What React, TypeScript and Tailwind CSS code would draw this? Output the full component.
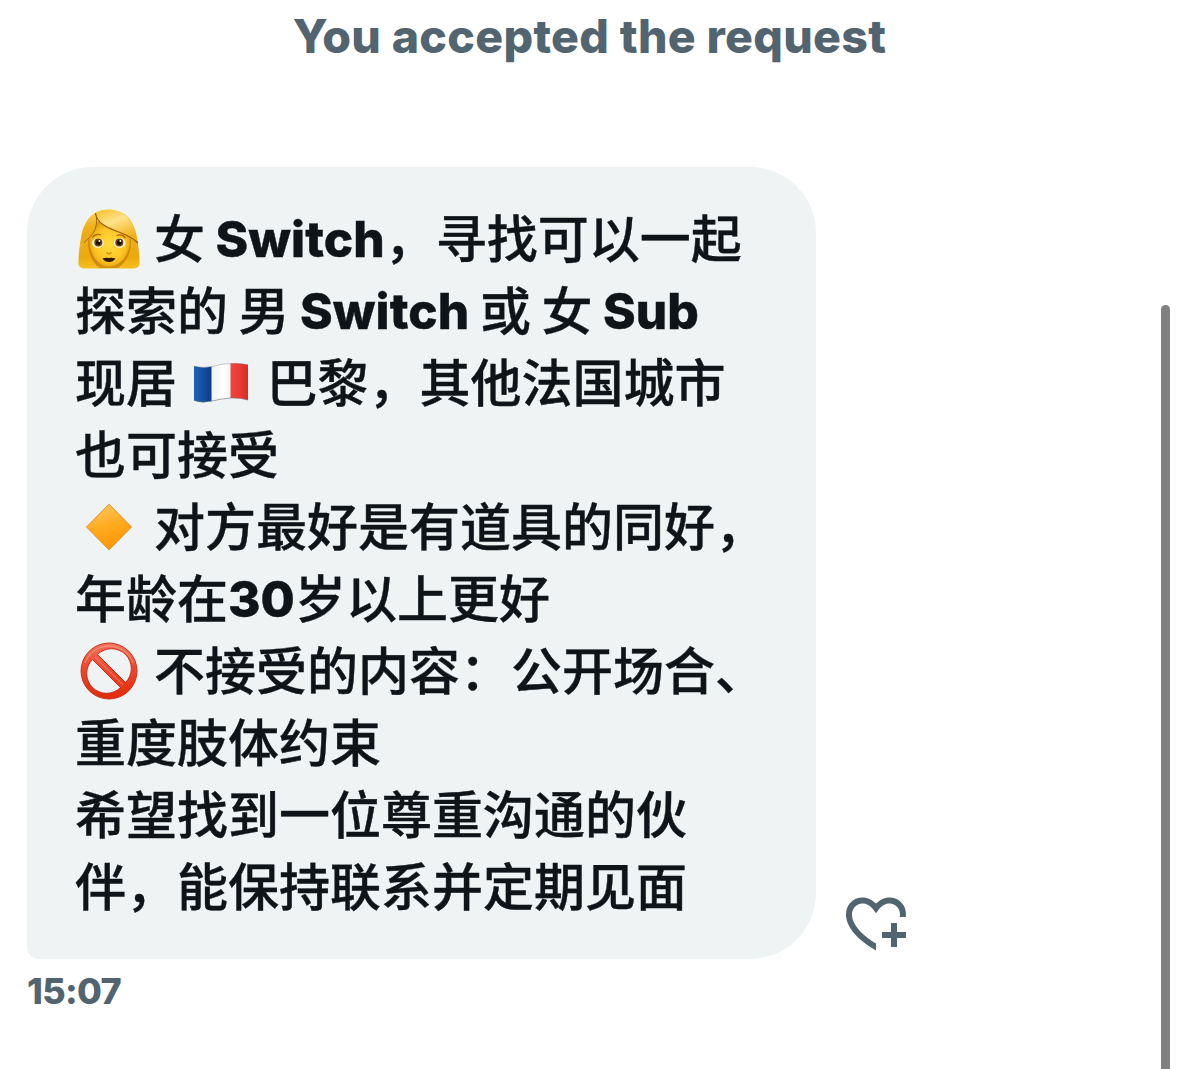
import type { ReactNode } from "react";

function WomanEmoji() {
  return (
    <svg viewBox="0 0 62 60" className="h-[60px] w-[62px]" role="img" aria-label="woman">
      <defs>
        <linearGradient id="hair" x1="0" y1="0" x2="0" y2="1">
          <stop offset="0" stopColor="#fbd04a" />
          <stop offset="0.4" stopColor="#efb01c" />
          <stop offset="0.8" stopColor="#eba90c" />
          <stop offset="1" stopColor="#f8bf22" />
        </linearGradient>
        <radialGradient id="face" cx="0.5" cy="0.52" r="0.56">
          <stop offset="0" stopColor="#ffdc3c" />
          <stop offset="0.65" stopColor="#fdc524" />
          <stop offset="1" stopColor="#e09a0c" />
        </radialGradient>
        <linearGradient id="fringe" x1="0" y1="0" x2="0.5" y2="1">
          <stop offset="0" stopColor="#f5be28" />
          <stop offset="0.45" stopColor="#ffe38a" />
          <stop offset="1" stopColor="#f1ae10" />
        </linearGradient>
      </defs>
      <path d="M30 0.5C15 1 7 11 4 24C2 34 0.500 43 0.500 54C0.500 58 3 59.500 8 59.500H54C59 59.500 61.500 58 61.500 54C61.500 43 60 34 58 24C54 9 46 0.500 30 0.500Z" fill="url(#hair)" />
      <path d="M10 32C10 18 17 11 31 11C46 11 53 20 53 33C53 44 48 54 40 59H22C14 54 10 44 10 32Z" fill="#b87208" fillOpacity="0.6" />
      <path d="M11.500 31C11.500 18 18 12 31 12C44 12 52 20 52 31C52 46 42 57.500 31 57.500C20 57.500 11.500 46 11.500 31Z" fill="url(#face)" />
      <path d="M17.500 4C10 8 6 16 4 25C3 30 2.500 35 2 39C8 31 15 27 17.500 19C19 14 19 9 17.500 4Z" fill="url(#hair)" />
      <path d="M6 34C10 29 15 27 17.500 19C19 14 19 9 17.500 4" fill="none" stroke="#a96905" strokeWidth="1" />
      <path d="M17.500 4C24 -1 41 -1 49 8C55 15 58 24 60 34C53 27 46 25 38 22C28 18 19 14 17.500 4Z" fill="url(#fringe)" />
      <path d="M17.500 4C19 14 28 18 38 22C46 25 53 27 60 34" fill="none" stroke="#95590a" strokeWidth="1.100" />
      <path d="M14.500 28.500Q17.500 24 23 26M38.500 26.500Q44 24.500 47.500 29" fill="none" stroke="#a86a08" strokeWidth="1.300" />
      <ellipse cx="20" cy="34" rx="5.900" ry="4.900" fill="#fff4cc" />
      <ellipse cx="41.700" cy="34" rx="5.900" ry="4.900" fill="#fff4cc" />
      <circle cx="20.300" cy="33.600" r="4" fill="#6b4114" />
      <circle cx="41.300" cy="33.600" r="4" fill="#6b4114" />
      <circle cx="20.300" cy="33.600" r="2.400" fill="#140c05" />
      <circle cx="41.300" cy="33.600" r="2.400" fill="#140c05" />
      <circle cx="21.300" cy="32" r="0.900" fill="#fff" />
      <circle cx="42.300" cy="32" r="0.900" fill="#fff" />
      <path d="M28.500 43.500Q31 46 33.500 43.500" fill="none" stroke="#d78b08" strokeWidth="1.300" />
      <path d="M24.500 49.500Q27.500 48.200 31 49Q34.500 48.200 37.500 49.500Q35 53 31 53Q27 53 24.500 49.500Z" fill="#34170b" />
    </svg>
  );
}

function FlagEmoji() {
  return (
    <svg viewBox="0 0 54 40" className="h-[40px] w-[54px]" role="img" aria-label="France">
      <defs>
        <linearGradient id="blue" x1="0" y1="0" x2="1" y2="0">
          <stop offset="0" stopColor="#1d63b5" />
          <stop offset="1" stopColor="#0a3c88" />
        </linearGradient>
        <linearGradient id="white" x1="0" y1="0" x2="1" y2="0">
          <stop offset="0" stopColor="#f0f0f1" />
          <stop offset="0.6" stopColor="#ffffff" />
          <stop offset="1" stopColor="#f4f4f5" />
        </linearGradient>
        <linearGradient id="red" x1="0" y1="0" x2="1" y2="0">
          <stop offset="0" stopColor="#f0453e" />
          <stop offset="0.5" stopColor="#ea3a34" />
          <stop offset="1" stopColor="#d52b27" />
        </linearGradient>
      </defs>
      <path d="M0 3Q8 5.500 18 3.500V38Q8 40.500 0 37.500Z" fill="url(#blue)" />
      <path d="M17.500 3.600Q27 1 37 0.500V35Q28 35.500 17.500 38.100Z" fill="url(#white)" />
      <path d="M36.500 0.500Q46 -0.300 54 1.800V37Q46 34.500 36.500 35Z" fill="url(#red)" />
      <path d="M0 37.500Q8 40.500 18 38Q28 35.500 37 35Q46 34.500 54 37" fill="none" stroke="#6c7178" strokeOpacity="0.6" />
      <path d="M0 3Q8 5.500 18 3.500Q28 0.500 37 0.500Q46 -0.300 54 1.800" fill="none" stroke="#6c7178" strokeOpacity="0.35" />
    </svg>
  );
}

function DiamondEmoji() {
  return (
    <svg viewBox="0 0 48 48" className="h-[48px] w-[48px]" role="img" aria-label="orange diamond">
      <defs>
        <linearGradient id="diamond" x1="0.3" y1="0" x2="0.6" y2="1">
          <stop offset="0" stopColor="#ffc95c" />
          <stop offset="0.45" stopColor="#ffac22" />
          <stop offset="1" stopColor="#fb9500" />
        </linearGradient>
      </defs>
      <path d="M24 1.200L46.500 24L24 46.800L1.500 24Z" fill="url(#diamond)" stroke="#e58b1c" strokeLinejoin="round" />
    </svg>
  );
}

function NoEntryEmoji() {
  return (
    <svg viewBox="0 0 58 58" className="h-[58px] w-[58px]" role="img" aria-label="prohibited">
      <defs>
        <linearGradient id="ring" x1="0" y1="0" x2="0" y2="1">
          <stop offset="0" stopColor="#f4735c" />
          <stop offset="0.4" stopColor="#ee4a30" />
          <stop offset="1" stopColor="#e32a0b" />
        </linearGradient>
      </defs>
      <path
        fillRule="evenodd"
        d="M29 1A28 28 0 1 1 29 57A28 28 0 1 1 29 1ZM17.500 12.500L45.500 40.500A19.500 19.500 0 0 0 17.500 12.500ZM12.500 17.500A19.500 19.500 0 0 0 40.500 45.500Z"
        fill="url(#ring)"
        stroke="#c4280f"
        strokeWidth="0.9"
      />
      <path d="M5 21A25.500 25.500 0 0 1 53 21" fill="none" stroke="#fbb0a0" strokeOpacity="0.5" strokeWidth="1.200" />
      <path d="M15 15L43 43" stroke="#f79080" strokeOpacity="0.5" strokeWidth="1.500" />
    </svg>
  );
}

function Emoji({ children }: { children: ReactNode }) {
  return <span className="flex w-[68.5px] shrink-0 items-center justify-center pb-px pr-[1.5px]">{children}</span>;
}

function Latin({ children }: { children: ReactNode }) {
  return <span className="font-['Inter'] text-[49.5px] font-extrabold tracking-[0.1px]">{children}</span>;
}

// The Han face sits low in its line box, so lift it to share a baseline with the Latin.
function Han({ children }: { children: ReactNode }) {
  return <span className="pb-[6px]">{children}</span>;
}

function Line({ children }: { children: ReactNode }) {
  return <div className="flex h-[72px] items-center gap-[10.5px] whitespace-nowrap leading-[66px]">{children}</div>;
}

function AddReaction() {
  return (
    <button className="ml-6 h-[72px] w-[72px] text-[#536471]" aria-label="Add reaction">
      <svg viewBox="0 0 24 24" fill="currentColor" className="h-[72px] w-[72px]">
        <path d="M17 12v3h-2.998v2h3v3h2v-3h3v-2h-3.001v-3H17zm-5 6.839c-3.871-2.34-6.053-4.639-7.127-6.609-1.112-2.04-1.031-3.7-.479-4.82.561-1.13 1.667-1.84 2.91-1.91 1.222-.06 2.68.51 3.892 2.16l.806 1.09.805-1.09c1.211-1.65 2.668-2.22 3.89-2.16 1.242.07 2.347.78 2.908 1.91.334.677.49 1.554.321 2.59h2.011c.153-1.283-.039-2.469-.539-3.48-.887-1.79-2.647-2.91-4.601-3.01-1.65-.09-3.367.56-4.796 2.01-1.43-1.45-3.147-2.1-4.798-2.01-1.954.1-3.714 1.22-4.601 3.01-.896 1.81-.846 4.17.514 6.67 1.353 2.48 4.003 5.12 8.382 7.67l.502.299v-2.32z" />
      </svg>
    </button>
  );
}

export default function App() {
  return (
    <div className="flex h-[1069px] w-[1179px] justify-between overflow-hidden bg-white font-['Inter','Noto_Sans_CJK_SC',sans-serif]">
      <main className="w-[1160px]">
        <h1 className="h-[167px] pl-[19px] text-center text-[46.5px] font-extrabold leading-[72px] tracking-[0.3px] text-[#536471]">
          You accepted the request
        </h1>

        <div className="flex items-end pl-[27px]">
          <div
            lang="zh-CN"
            className="h-[792px] w-[789px] rounded-[66px] rounded-bl-[12px] bg-[#eff3f4] py-9 pl-12 font-['Noto_Sans_CJK_SC',sans-serif] text-[51px] font-medium text-[#0f1419] [-webkit-text-stroke:0.4px_#0f1419]"
          >
            <Line>
              <Emoji><WomanEmoji /></Emoji>
              <Han>女</Han>
              <span className="flex items-center"><Latin>Switch</Latin><Han>&#xff0c;寻找可以一起</Han></span>
            </Line>
            <Line>
              <Han>探索的</Han>
              <Han>男</Han>
              <Latin>Switch</Latin>
              <Han>或</Han>
              <Han>女</Han>
              <Latin>Sub</Latin>
            </Line>
            <Line>
              <Han>现居</Han>
              <Emoji><FlagEmoji /></Emoji>
              <Han>巴黎&#xff0c;其他法国城市</Han>
            </Line>
            <Line>
              <Han>也可接受</Han>
            </Line>
            <Line>
              <Emoji><DiamondEmoji /></Emoji>
              <Han>对方最好是有道具的同好&#xff0c;</Han>
            </Line>
            <Line>
              <span className="flex items-center"><Han>年龄在</Han><Latin>30</Latin><Han>岁以上更好</Han></span>
            </Line>
            <Line>
              <Emoji><NoEntryEmoji /></Emoji>
              <Han>不接受的内容&#xff1a;公开场合、</Han>
            </Line>
            <Line>
              <Han>重度肢体约束</Han>
            </Line>
            <Line>
              <Han>希望找到一位尊重沟通的伙</Han>
            </Line>
            <Line>
              <Han>伴&#xff0c;能保持联系并定期见面</Han>
            </Line>
          </div>
          <AddReaction />
        </div>

        <time className="block pl-[27px] pt-[8px] text-[36px] font-extrabold leading-[48px] tracking-[-0.7px] text-[#536471]">15:07</time>
      </main>

      <div className="mr-[9px] mt-[305px] w-[9px] rounded-t-full bg-[#808080]" />
    </div>
  );
}
